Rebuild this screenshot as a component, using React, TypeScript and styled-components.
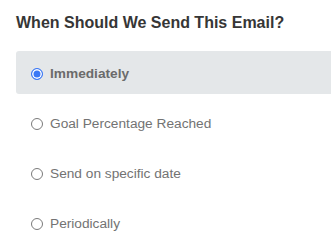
import React, { useState } from 'react';
import styled, { createGlobalStyle } from 'styled-components';

const GlobalStyle = createGlobalStyle`
  html, body {
    margin: 0;
    padding: 0;
    background: #ffffff;
  }
`;

const Page = styled.div`
  padding: 13px 0 0 16px;
  font-family: 'Liberation Sans', Arial, sans-serif;
`;

const Title = styled.h2`
  margin: 0 0 19px;
  font-size: 16px;
  font-weight: 700;
  color: #363636;
  line-height: 19px;
`;

const OptionList = styled.div`
  display: flex;
  flex-direction: column;
  gap: 7px;
`;

// the selected row runs on past the right edge of the panel
const Option = styled.label<{ $active: boolean }>`
  display: flex;
  align-items: center;
  gap: 7px;
  height: 43px;
  padding: 2px 0 0 15px;
  box-sizing: border-box;
  border-radius: 3px 0 0 3px;
  background: ${(p) => (p.$active ? '#e4e7e9' : 'transparent')};
  color: ${(p) => (p.$active ? '#6b6b6b' : '#737373')};
  font-size: 13.7px;
  font-weight: ${(p) => (p.$active ? 700 : 400)};
  cursor: pointer;
`;

const Dot = styled.span<{ $active: boolean }>`
  width: 12px;
  height: 12px;
  border-radius: 50%;
  box-sizing: border-box;
  flex: none;
  border: ${(p) => (p.$active ? '1.5px solid #3b78f5' : '1px solid #7a7a7a')};
  background: ${(p) => (p.$active ? '#3b78f5' : '#ffffff')};
  box-shadow: ${(p) => (p.$active ? 'inset 0 0 0 1.5px #ffffff' : 'none')};
`;

const options = ['Immediately', 'Goal Percentage Reached', 'Send on specific date', 'Periodically'];

export default function App() {
  const [selected, setSelected] = useState(0);
  return (
    <Page>
      <GlobalStyle />
      <Title>When Should We Send This Email?</Title>
      <OptionList>
        {options.map((o, i) => (
          <Option key={o} $active={selected === i} onClick={() => setSelected(i)}>
            <Dot $active={selected === i} />
            {o}
          </Option>
        ))}
      </OptionList>
    </Page>
  );
}
